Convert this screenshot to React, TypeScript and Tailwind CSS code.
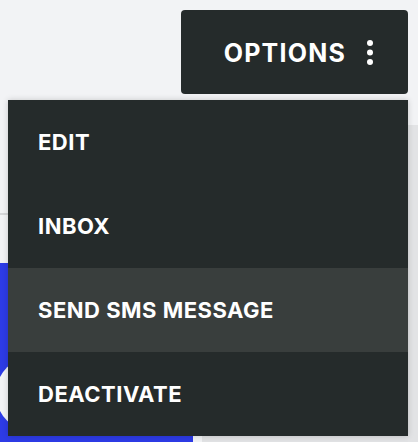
import React from "react";

const items = ["EDIT", "INBOX", "SEND SMS MESSAGE", "DEACTIVATE"];

export default function App() {
  return (
    <div
      className="relative w-[418px] h-[442px] overflow-hidden bg-[#f2f3f5]"
      style={{ fontFamily: "Inter, 'Noto Sans', sans-serif" }}
    >
      {/* page behind the menu */}
      <div className="flex h-full">
        <div className="flex flex-col flex-1">
          <div className="h-[215px] border-b-2 border-[#d6d7d9]" />
          <div className="h-[48px]" />
          <div className="flex flex-1 items-end">
            <div className="relative w-[193px] h-full bg-[#2d3be6]">
              <div className="absolute left-[-4px] top-[93px] w-[76px] h-[76px] rounded-full bg-[#f2f3f5]" />
            </div>
            <div className="ml-[9px] flex-1 h-[6px] bg-[#e1e2e4]" />
          </div>
        </div>
        <div className="w-[10px] mt-[125px] bg-[#e2e3e5]" />
      </div>

      {/* options button */}
      <button className="absolute right-[10px] top-[10px] w-[227px] h-[84px] rounded-[4px] bg-[#252b2b] flex items-center justify-end pr-[35px] gap-[21px] text-white">
        <span className="text-[25px] font-bold tracking-[1.2px] pt-[3px]">OPTIONS</span>
        <svg width="6" height="25" viewBox="0 0 6 25" fill="white">
          <circle cx="3" cy="3" r="3" />
          <circle cx="3" cy="12.5" r="3" />
          <circle cx="3" cy="22" r="3" />
        </svg>
      </button>

      {/* dropdown */}
      <ul className="absolute left-[8px] top-[100px] w-[400px] bg-[#252b2b] shadow-[0_0_6px_rgba(0,0,0,0.18)]">
        {items.map((item) => (
          <li
            key={item}
            className={`h-[84px] flex items-center pl-[30px] text-white text-[22px] font-bold tracking-[0.5px] ${
              item === "SEND SMS MESSAGE" ? "bg-[#393e3d]" : ""
            }`}
          >
            {item}
          </li>
        ))}
      </ul>
    </div>
  );
}
